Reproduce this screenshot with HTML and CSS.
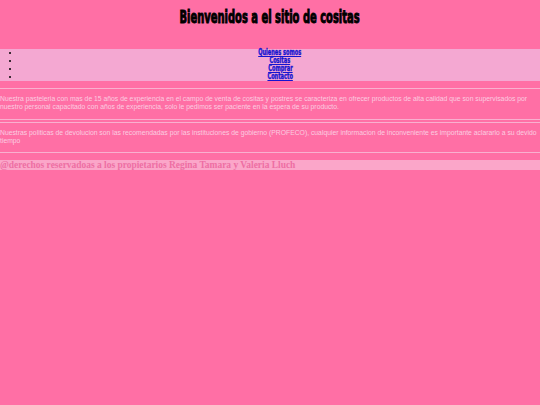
FILE: index.html
```html
<!DOCTYPE html>
<html lang="es">
<head>
<meta charset="utf-8">
<title>Cositas</title>
<link rel="stylesheet" href="styles.css">
</head>
<body>
<header class="top">
  <h1 class="title">Bienvenidos a el sitio de cositas</h1>
</header>
<nav class="menu">
  <ul class="menu-list">
    <li class="menu-item"><a class="menu-link" href="#">Quienes somos</a></li>
    <li class="menu-item"><a class="menu-link" href="#">Cositas</a></li>
    <li class="menu-item"><a class="menu-link" href="#">Comprar</a></li>
    <li class="menu-item"><a class="menu-link" href="#">Contacto</a></li>
  </ul>
</nav>
<main class="content">
  <hr class="rule">
  <p class="text">Nuestra pasteleria con mas de 15 años de experiencia en el campo de venta de cositas y postres se caracteriza en ofrecer productos de alta calidad que son supervisados por nuestro personal capacitado con años de experiencia, solo le pedimos ser paciente en la espera de su producto.</p>
  <hr class="rule">
  <hr class="rule rule-tight">
  <p class="text text-last">Nuestras politicas de devolucion son las recomendadas por las instituciones de gobierno (PROFECO), cualquier informacion de inconveniente es importante aclararlo a su devido tiempo</p>
  <hr class="rule">
</main>
<footer class="foot">@derechos reservadoas a los propietarios Regina Tamara y Valeria Lluch</footer>
</body>
</html>
```
FILE: styles.css
```css
body {
  margin: 0;
  background: #ff6fa5;
  font-family: "Liberation Sans", Arial, sans-serif;
}
.top {
  height: 49px;
  display: flex;
  justify-content: center;
}
.title {
  display: inline-block;
  margin: 8px 0 0;
  font-family: "DejaVu Sans Condensed", sans-serif;
  font-weight: bold;
  font-size: 17px;
  line-height: 18px;
  color: #000;
  -webkit-text-stroke: 0.9px #000;
  transform: scaleX(0.65);
  white-space: nowrap;
}
.menu-list {
  margin: 0;
  padding: 0 0 0 20px;
  background: #f4a8d2;
  text-align: center;
  font-size: 8px;
  line-height: 8px;
}
.menu-item {
  height: 8px;
}
.menu-link {
  display: inline-block;
  vertical-align: top;
  font-family: "DejaVu Sans Condensed", sans-serif;
  font-weight: bold;
  font-size: 8px;
  line-height: 8px;
  color: #1414d0;
  -webkit-text-stroke: 0.35px #1414d0;
  transform: scaleX(0.7);
}
.content {
  padding-top: 7px;
}
.rule {
  margin: 0;
  border: 0;
  border-top: 1px solid #f9b0cf;
  height: 0;
}
.rule-tight {
  margin-top: 2px;
}
.text {
  margin: 6px 0 8px;
  font-size: 6.8px;
  line-height: 8px;
  color: #fbcde0;
}
.text-last {
  margin-bottom: 7px;
}
.foot {
  margin-top: 7px;
  background: #fba6c9;
  color: #ee6ea3;
  font-family: "Liberation Serif", "Times New Roman", serif;
  font-weight: bold;
  font-size: 9.45px;
  line-height: 10px;
}
```
